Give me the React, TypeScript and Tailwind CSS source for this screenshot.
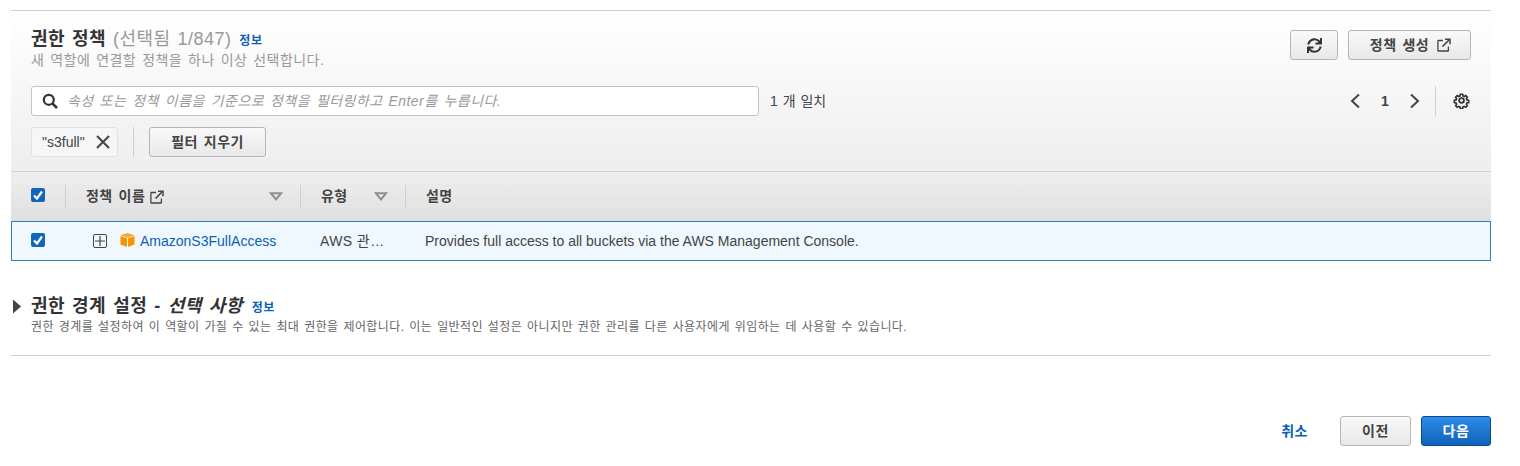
import { FaSync } from "react-icons/fa";

const font = "font-['Liberation_Sans','Noto_Sans_CJK_KR',sans-serif]";
const ko = "tracking-[0.45px] [word-spacing:1.6px]";

function Ext({ className = "" }: { className?: string }) {
  return (
    <svg viewBox="0 0 14 14" className={className} fill="none" stroke="currentColor" strokeWidth="1.3">
      <path d="M6 2.5H1.5a.6.6 0 0 0-.6.6v9.3a.6.6 0 0 0 .6.6h9.3a.6.6 0 0 0 .6-.6V8.5" />
      <path d="M5.5 8.5L12 2" strokeWidth="1.7" />
      <path d="M8 1.3h5v5" strokeWidth="1.5" />
    </svg>
  );
}

function Check() {
  return (
    <span className="flex h-[14px] w-[14px] items-center justify-center rounded-[2px] bg-[#1166bb]">
      <svg viewBox="0 0 14 14" className="h-[14px] w-[14px]" fill="none" stroke="#fff" strokeWidth="2.2">
        <path d="M3 7.5l3 3 5-7" />
      </svg>
    </span>
  );
}

function Caret() {
  return (
    <svg viewBox="0 0 14 9" className="h-[9px] w-[14px]" fill="none" stroke="#8a9094" strokeWidth="2">
      <path d="M1.8 1.2h10.4L7 7.4z" />
    </svg>
  );
}

const btn =
  "flex items-center justify-center rounded-[3px] border border-[#b6b6b6] bg-gradient-to-b from-[#f9f9f9] to-[#e8e8e8] text-[14px] font-bold text-[#444]";

export default function App() {
  return (
    <div className={`${font} ml-[11px] w-[1480px] pt-[10px] text-[#444]`}>
      <div className="border-t border-[#cfcfcf]">
        {/* Panel header */}
        <div className="h-[160px] bg-gradient-to-b from-white to-[#eeeeee] px-[20px] pt-[16px]">
          <div className="flex h-[42px] justify-between">
            <div>
              <div className="flex h-[24px] items-baseline">
                <span className={`text-[18px] font-bold leading-[24px] text-[#333] ${ko}`}>권한 정책</span>
                <span className={`ml-[7px] text-[18px] leading-[24px] text-[#999] ${ko}`}>(선택됨 1/847)</span>
                <span className="ml-[8px] text-[12px] font-bold tracking-[0.5px] text-[#0b5fb5]">정보</span>
              </div>
              <div className={`mt-[1px] text-[14px] leading-[17px] text-[#999] ${ko}`}>새 역할에 연결할 정책을 하나 이상 선택합니다.</div>
            </div>
            <div className="mt-[3px] flex h-[30px] gap-[10px]">
              <button className={`${btn} w-[48px]`}>
                <FaSync className="h-[15px] w-[15px] text-[#333]" />
              </button>
              <button className={`${btn} w-[123px] gap-[8px] pl-[2px] ${ko}`}>
                <span>정책 생성</span>
                <Ext className="h-[14px] w-[14px] text-[#444]" />
              </button>
            </div>
          </div>

          <div className="mt-[17px] flex h-[30px] items-center">
            <div className="flex h-[30px] w-[728px] items-center rounded-[3px] border border-[#c4c4c4] bg-white pl-[10px]">
              <svg viewBox="0 0 16 16" className="h-[16px] w-[16px]" fill="none" stroke="#333" strokeWidth="2.2">
                <circle cx="6.8" cy="6.8" r="5" />
                <path d="M10.6 10.6L15 15" strokeWidth="2.6" />
              </svg>
              <span className={`ml-[9px] text-[14px] italic text-[#9a9a9a] ${ko}`}>속성 또는 정책 이름을 기준으로 정책을 필터링하고 Enter를 누릅니다.</span>
            </div>
            <span className="ml-[11px] text-[14px] text-[#444] [word-spacing:1px]">1 개 일치</span>
            <div className="ml-auto flex items-center">
              <svg viewBox="0 0 12 16" className="ml-[1px] h-[16px] w-[12px]" fill="none" stroke="#444" strokeWidth="2">
                <path d="M10 1.5L3 8l7 6.5" />
              </svg>
              <span className="mx-[20px] w-[8px] text-[14px] font-bold text-[#444]">1</span>
              <svg viewBox="0 0 12 16" className="h-[16px] w-[12px]" fill="none" stroke="#444" strokeWidth="2">
                <path d="M2 1.5L9 8l-7 6.5" />
              </svg>
              <span className="ml-[14px] h-[30px] w-px bg-[#cfcfcf]" />
              <svg viewBox="0 0 24 24" className="mb-[1px] ml-[17px] mr-[1px] h-[17px] w-[17px]" fill="none" stroke="#333" strokeWidth="2.6">
                <circle cx="12" cy="12" r="3.4" />
                <path d="M10.2 2.2h3.6l.6 2.8 1.9.8 2.4-1.5 2.5 2.5-1.5 2.4.8 1.9 2.8.6v3.6l-2.8.6-.8 1.9 1.5 2.4-2.5 2.5-2.4-1.5-1.9.8-.6 2.8h-3.6l-.6-2.8-1.9-.8-2.4 1.5-2.5-2.5 1.5-2.4-.8-1.9-2.8-.6v-3.6l2.8-.6.8-1.9-1.5-2.4 2.5-2.5 2.4 1.5 1.9-.8z" transform="translate(1.2 1.2) scale(.9)" />
              </svg>
            </div>
          </div>

          <div className="mt-[11px] flex h-[30px] items-center">
            <div className="flex h-[30px] w-[87px] items-center rounded-[3px] border border-[#e2e2e2] bg-[#f6f6f6] pl-[10px] text-[14px] text-[#444]">
              <span>"s3full"</span>
              <svg viewBox="0 0 14 14" className="ml-[11px] h-[14px] w-[14px]" fill="none" stroke="#444" strokeWidth="2">
                <path d="M1 1l12 12M13 1L1 13" />
              </svg>
            </div>
            <span className="ml-[15px] h-[30px] w-px bg-[#cfcfcf]" />
            <button className={`${btn} ml-[15px] h-[30px] w-[117px] text-[#333] ${ko}`}>필터 지우기</button>
          </div>
        </div>

        {/* Table header */}
        <div className="flex h-[50px] items-center border-t border-[#d0d0d0] bg-gradient-to-b from-[#eeeeee] to-[#e0e0e0] text-[14px] font-bold text-[#444]">
          <div className="mb-[3px] flex w-[54px] justify-end pr-[20px]">
            <Check />
          </div>
          <span className="h-[24px] w-px bg-[#cfcfcf]" />
          <div className="flex w-[234px] items-center pl-[20px] pr-[17px]">
            <span className={ko}>정책 이름</span>
            <Ext className="ml-[5px] h-[14px] w-[14px] text-[#444]" />
            <span className="ml-auto"><Caret /></span>
          </div>
          <span className="h-[24px] w-px bg-[#cfcfcf]" />
          <div className="flex w-[104px] items-center pl-[20px] pr-[17px]">
            <span className={ko}>유형</span>
            <span className="ml-auto"><Caret /></span>
          </div>
          <span className="h-[24px] w-px bg-[#cfcfcf]" />
          <div className={`pl-[20px] ${ko}`}>설명</div>
        </div>

        {/* Row */}
        <div className="flex h-[40px] items-center border border-[#2e7fd0] bg-[#f0f8ff] text-[14px] text-[#444]">
          <div className="mb-[2px] flex w-[53px] justify-end pr-[20px]">
            <Check />
          </div>
          <div className="ml-[28px] flex h-[14px] w-[14px] items-center justify-center rounded-[2px] border border-[#444]">
            <svg viewBox="0 0 10 10" className="h-[10px] w-[10px]" stroke="#444" strokeWidth="1.2">
              <path d="M5 0v10M0 5h10" />
            </svg>
          </div>
          <svg viewBox="0 0 16 16" className="mb-[3px] ml-[13px] h-[16px] w-[15px]">
            <path d="M8 .5L15.5 3 8 5.6.5 3z" fill="#f9a825" />
            <path d="M.5 3.8L7.4 6.2V15.5L.5 12.9z" fill="#f79400" />
            <path d="M15.5 3.8L8.6 6.2V15.5l6.9-2.6z" fill="#f79400" />
          </svg>
          <a className="ml-[5px] w-[180px] text-[#0b5fb5]">AmazonS3FullAccess</a>
          <span className="w-[105px] tracking-[0.4px]">AWS 관…</span>
          <span>Provides full access to all buckets via the AWS Management Console.</span>
        </div>

        {/* Boundary section */}
        <div className="mt-[33px] flex h-[61px]">
          <svg viewBox="0 0 8 14" className="ml-[2px] mt-[5px] h-[15px] w-[8px]">
            <path d="M0 0l8 7-8 7z" fill="#444" />
          </svg>
          <div className="ml-[10px]">
            <div className="flex h-[24px] items-baseline">
              <span className={`text-[18px] font-bold leading-[24px] text-[#333] ${ko}`}>
                권한 경계 설정 - <i>선택 사항</i>
              </span>
              <span className="ml-[9px] text-[12px] font-bold tracking-[0.5px] text-[#0b5fb5]">정보</span>
            </div>
            <div className="mt-[1px] whitespace-nowrap text-[12px] leading-[16px] tracking-[0.4px] text-[#666] [word-spacing:1.2px]">
              권한 경계를 설정하여 이 역할이 가질 수 있는 최대 권한을 제어합니다. 이는 일반적인 설정은 아니지만 권한 관리를 다른 사용자에게 위임하는 데 사용할 수 있습니다.
            </div>
          </div>
        </div>
        <div className="border-t border-[#cfcfcf]" />

        {/* Footer */}
        <div className="mt-[60px] flex h-[30px] items-center justify-end">
          <a className="mr-[32px] text-[14px] font-bold tracking-[0.5px] text-[#0b5fb5]">취소</a>
          <button className={`${btn} h-[30px] w-[71px] text-[#444] tracking-[0.5px]`}>이전</button>
          <button className="ml-[10px] flex h-[30px] w-[70px] items-center justify-center rounded-[3px] border border-[#0a4a8c] bg-gradient-to-b from-[#2e8ceb] to-[#0f62b8] text-[14px] font-bold tracking-[0.5px] text-white">
            다음
          </button>
        </div>
      </div>
    </div>
  );
}
